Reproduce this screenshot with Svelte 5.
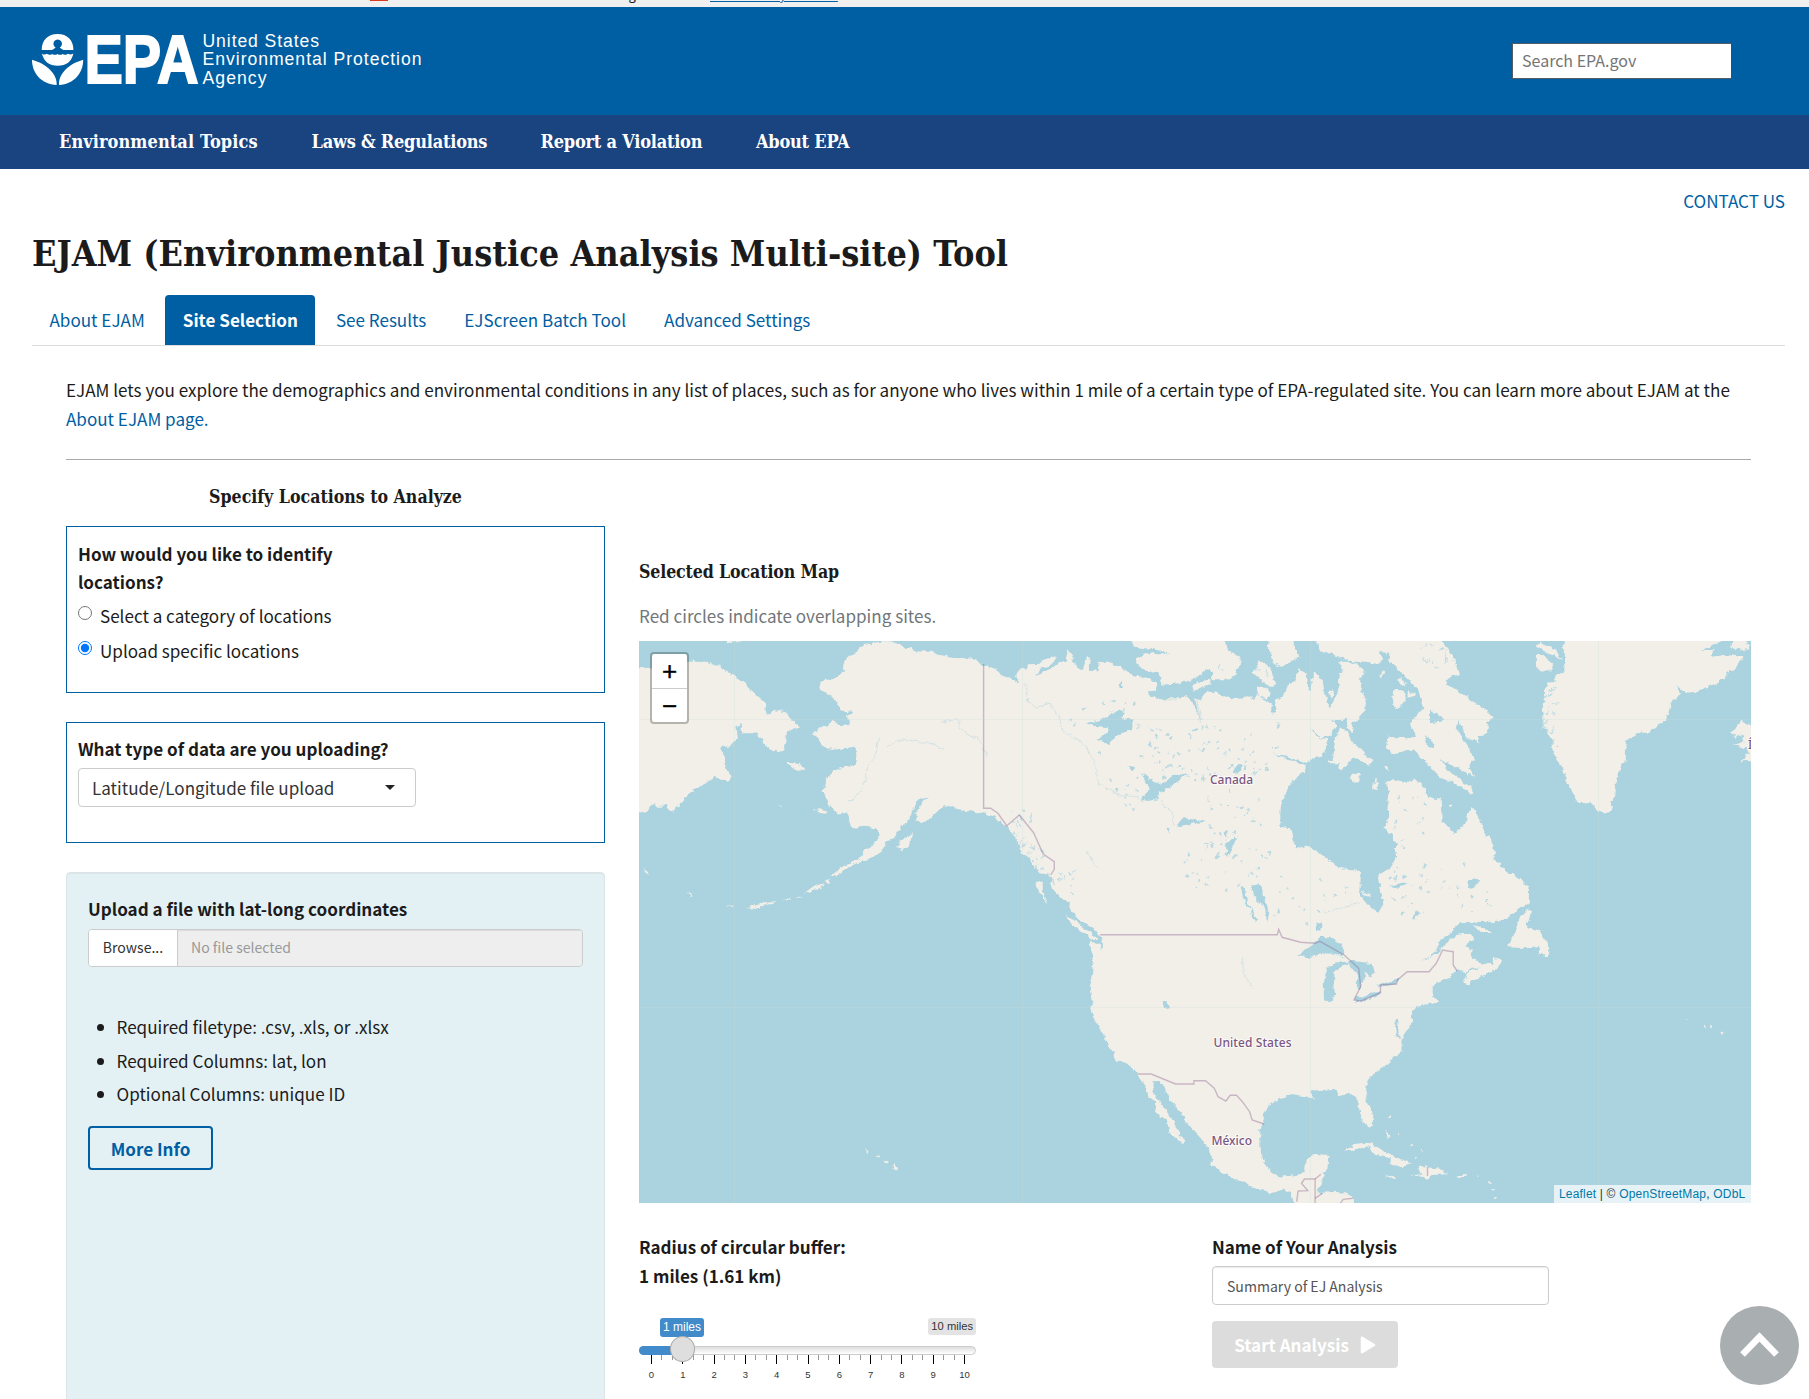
<script>
  const nav = ['Environmental Topics', 'Laws & Regulations', 'Report a Violation', 'About EPA'];
  const tabs = ['About EJAM', 'Site Selection', 'See Results', 'EJScreen Batch Tool', 'Advanced Settings'];
  const requirements = [
    'Required filetype: .csv, .xls, or .xlsx',
    'Required Columns: lat, lon',
    'Optional Columns: unique ID'
  ];

  let active = $state('Site Selection');
  let mode = $state('upload');

  // Slider scale: one major tick per mile, two minor ticks between
  const ticks = Array.from({ length: 31 }, (_, i) => ({ major: i % 3 === 0, label: i / 3, left: (i / 30) * 100 }));

  // Map sheets: every sheet has its own origin and scale
  const sheets = {
    A: [630, 540, 2.8, 3],
    B: [1180, 540, 2.613, 3],
    C: [1000, 840, 2.063, 3],
    D: [1000, 640, 3, 3]
  };
  function project(src) {
    let s = sheets.D;
    const out = [];
    for (const token of src.trim().split(/\s+/)) {
      if (sheets[token]) s = sheets[token];
      else {
        const [x, y] = token.split(',').map(Number);
        out.push(`${(s[0] + x / s[2]).toFixed(1)},${(s[1] + y / s[3]).toFixed(1)}`);
      }
    }
    return out.join(' ');
  }

  const land = [
    // North American mainland
    `A 537,420 575,417 595,400 598,375 612,348 640,330 652,312 685,308 720,303 750,310 770,328 785,322 800,335 840,333 865,345 900,350 925,358 955,352 975,365 990,378 1015,382 1040,402 1065,415 1090,428
     D 45,105 60,88 80,85 85,73 110,72 140,58 172,48 165,60 145,78 120,85 105,110 125,95 150,88 175,70 200,60 197,22 215,45 225,75 245,90 262,48 272,60 268,90 292,92 297,66 325,68 355,78 385,98 415,110 450,116 472,135 468,150 445,155 447,170 480,178 530,178 560,165 570,180 585,200 600,250 592,200 582,175 600,180 622,150 650,160 690,175 740,172 765,178 768,160 790,180 815,190 818,220 830,215 825,180 850,170 862,140 885,120 895,85 920,100 925,150 932,150 935,120 945,95 965,120 970,150 985,205 1000,190 1015,150 1018,110 1030,100 1015,65 1040,65 1070,75 1095,90 1080,120 1085,155 1098,185 1095,215 1065,245 1055,250 1060,280 1040,262 1035,235 1020,245 995,240 1010,255 1000,275 985,292 960,290 932,265 950,290 985,298 985,310 965,350 932,355 918,370 915,395 895,405 870,435 855,460 842,500 840,560 870,565 885,625 910,618 950,632 985,660 1025,685 1080,690 1082,740 1080,765 1115,805 1135,815 1150,790 1140,740 1132,705 1165,690 1188,655 1188,610 1172,580 1150,565 1170,525 1162,480 1168,465 1160,425 1180,418 1225,428 1245,418 1275,445 1285,470 1322,480 1325,545 1362,580 1390,560 1405,520 1417,498 1440,540 1455,580 1480,615 1482,660 1500,672
     B 836,980 885,1012 912,1045
     C 1091,190 1065,215 1035,245 950,246 935,272 915,295 900,330 885,350 865,362 890,350 910,330 925,300 950,282 975,282 978,295 960,315 975,330 972,350 985,368 1010,372 1015,378 985,382 960,395 942,393 925,415 905,425 892,440 893,465 905,488 890,490 860,500 850,510 850,545 838,575 828,600 828,635 810,655 800,672 785,685 770,705 758,720 753,745 757,780 768,820 770,855 760,865 745,835 738,800 738,775 722,760 705,768 690,750 665,752 640,755 648,775 625,770 600,765 575,775 550,800 542,850 537,870 537,930 545,970 560,998 580,1010 610,1005 625,1000 635,950 655,943 680,945 675,985 665,1015 658,1040 655,1060 690,1055 715,1060 730,1075 730,1100 610,1100 600,1065 585,1045 555,1060 520,1040 490,1020 460,1000 438,975 435,950 425,915 400,870 385,850 375,820 350,780 335,730 315,722 314,750 325,780 345,815 358,845 370,885 382,905 378,912 350,880 345,845 320,815 322,790 305,765 300,740 285,702 275,685 258,668 238,660 235,640 218,605 215,580 197,545 188,515 190,490 185,450 190,400 192,350 183,303 205,310 212,335 212,305 205,283 190,260 165,240 150,215 140,190 120,165 105,140 105,110
     A 1180,1005 1150,1000 1130,980 1115,950 1095,940 1085,905 1072,885 1060,865 1040,850 1020,830 1000,822 965,815 935,812 900,800 880,795 860,815 830,845 800,845 800,815 820,790 835,770 810,775 790,810 785,840 760,860 745,890 720,905 700,935 670,960 640,965 610,985 570,1012 565,1005 600,975 640,960 660,930 690,905 700,880 690,865 655,860 620,865 612,830 608,820 580,820 555,790 542,755 550,720 570,690 605,680 635,670 632,620 600,625 565,630 540,620 530,600 508,580 540,560 570,540 585,555 615,555 610,530 620,515 588,510 580,485 560,465 533,445`,
    // Chukotka
    `A 10,380 60,385 160,365 215,365 250,380 285,405 320,430 350,465 380,490 385,525 400,510 440,518 450,540 475,558 440,575 430,630 415,640 385,620 365,590 345,580 315,580 310,550 298,560 302,595 280,620 250,620 265,650 270,690 285,710 275,722 240,712 180,750 145,785 120,818 100,797 60,797 45,820 10,812`,
    // Arctic archipelago
    `D 388,-9 400,20 460,28 500,35 510,40 440,40 405,55 415,80 450,97 475,100 485,135 540,130 590,115 620,88 640,100 635,118 690,118 705,105 720,70 718,50 690,35 665,-9`,
    `D 575,140 600,125 632,118 630,132 580,152`,
    `D 760,100 780,62 810,85 825,130 815,140 790,125`,
    `D 805,-9 808,40 820,70 850,80 870,70 898,50 875,-9`,
    `D 770,140 800,140 812,160 795,178 775,165`,
    `D 945,-9 960,30 1000,45 1060,65 1100,65 1130,75 1150,60 1140,35 1165,45 1165,65 1190,85 1215,110 1235,130 1255,150 1270,205 1230,250 1245,290 1220,295 1165,290 1158,320 1175,340 1240,330 1280,370 1320,410 1385,440 1415,460 1410,440 1350,395 1320,360 1350,370 1410,405 1425,410 1405,385 1425,360 1410,330 1390,300 1370,270 1375,240 1400,290 1440,310 1440,285 1465,280 1460,245 1482,232 1450,205 1420,185 1390,165 1345,135 1340,120 1380,100 1365,60 1345,30 1320,-9`,
    `D 1020,262 1040,275 1060,310 1090,330 1092,345 1118,360 1105,375 1060,350 1040,375 1020,390 1015,370 985,370 1000,350 1005,300`,
    `D 1050,410 1065,398 1085,400 1070,428 1055,425`,
    `D 1127,420 1135,432 1130,450 1120,448 1119,430`,
    `D 1178,160 1190,149 1212,152 1217,175 1210,195 1190,204 1176,192`,
    `D 1225,150 1235,160 1250,162 1248,174 1226,172`,
    `D 1138,110 1152,88 1158,95 1146,118`,
    `D 1190,118 1205,115 1220,135 1200,132`,
    `D 1150,378 1165,378 1168,390 1155,388`,
    `D 1405,445 1417,458 1412,466`,
    `D 1345,495 1355,493 1352,508`,
    `D 1085,755 1108,762 1108,770 1090,766`,
    `D 990,155 998,150 998,175 988,175`,
    // Greenland and Iceland
    `B 1003,290 1003,340 1005,400 985,400 980,430 960,430 948,490 950,560 972,600 980,650 1000,680 1010,720 1040,790 1070,785 1105,822 1125,815 1135,760 1140,710 1165,660 1165,605 1200,575 1230,575 1270,540 1285,485 1310,460 1298,432 1320,458 1350,455 1410,425 1478,352 1430,345 1385,350 1400,330 1360,330 1400,315 1425,290`,
    `B 930,345 950,345 975,375 970,390 945,398 930,380`,
    `B 930,320 940,308 985,330 1000,360 965,340`,
    `B 1445,290 1440,325 1485,332 1482,290`,
    `B 1500,560 1465,542 1440,580 1450,590 1470,585 1475,605 1445,615 1480,625 1490,640 1465,660 1500,662`,
    // Atlantic coast and Caribbean
    `C 1090,205 1098,212 1085,262 1110,270 1120,295 1133,320 1130,350 1110,340 1118,320 1090,325 1045,322 1055,295 1065,265 1072,235`,
    `C 975,255 1000,262 1015,280 990,275`,
    `C 955,430 965,400 990,380 1015,375 1020,350 1038,365 1025,388 985,410 968,433`,
    `C 712,932 730,912 760,908 790,930 815,950 848,970 830,978 808,975 805,955 775,945 760,922`,
    `C 845,1005 870,1003 862,980 905,985 925,1003 890,1005 885,1018 870,1010`,
    `C 943,1005 962,1006 958,1014 943,1013`,
    `C 795,1005 820,1012 812,1018`,
    `C 795,868 804,890 799,895`,
    // Pacific islands
    `C 135,228 160,245 195,290 205,300 190,300 150,258`,
    `C 70,125 88,125 88,150 98,190 78,150`,
    `A 745,925 760,900 792,880 788,905 765,930`,
    `A 440,668 475,672 492,688 475,692 445,680`,
    `A 518,812 535,803 550,812 545,822`,
    `A 490,1058 510,1042 540,1030 535,1042 500,1060`,
    `A 545,1022 556,1018 556,1028 548,1030`,
    `A 320,1102 345,1097 400,1085 410,1088 350,1103`,
    `A 420,1084 450,1073 452,1078`,
    `A 462,1072 482,1064 480,1070`,
    `A 158,1060 178,1066 172,1071`,
    `A 270,1098 284,1096 286,1102`,
    `A 38,984 48,990 52,1004 44,1000`,
    `A 412,793 428,800 424,804`,
    `A 690,1848 700,1848 700,1856`,
    `A 655,1830 668,1832 664,1838`,
    `A 710,1860 722,1864 724,1870 712,1868`,
    `A 735,1872 750,1880 748,1896 738,1890`,
    `A 270,296 320,296 300,306 275,310`
  ].map(project);

  const lakes = [
    `D 258,250 300,240 355,212 372,220 360,232 382,240 400,235 395,270 370,278 350,285 325,312 292,300 320,280 325,265 295,262`,
    `D 425,480 430,468 450,450 425,400 460,425 485,435 520,405 565,402 535,420 505,445 480,460 475,478 440,483`,
    `D 525,565 535,545 555,535 620,545 580,550 545,558`,
    `D 500,563 512,565 508,578`,
    `D 677,645 680,608 700,590 708,592 700,622 688,645`,
    `D 670,575 682,570 682,590`,
    `D 755,740 772,730 782,740 790,765 808,820 803,842 796,835 797,805 770,780`,
    `D 722,745 732,742 742,790 776,845 765,848 750,810 735,790`,
    `D 700,390 712,375 725,376 720,400 702,402`,
    `D 385,378 405,382 400,394 388,388`,
    `D 815,340 860,348 920,372 915,378 860,355`,
    `D 1238,835 1250,815 1260,815 1245,842`,
    `D 1405,720 1420,712 1440,722 1425,740 1405,745`,
    `D 1170,740 1220,728 1222,734 1190,745`,
    `D 1290,210 1330,230 1325,245 1290,250`,
    `D 1278,285 1300,305 1305,325 1280,318`,
    `C 653,250 660,245 665,258 661,272 654,270`,
    `C 613,350 635,320 655,305 660,290 690,295 695,308 708,312 710,340 705,352 690,342 670,340 640,350`,
    `C 668,480 668,430 672,400 680,375 700,365 720,366 718,374 700,382 690,402 688,440 692,460 685,485 675,486`,
    `C 718,360 740,365 765,368 772,400 762,408 752,396 750,420 742,450 736,440 738,400 722,378`,
    `C 732,475 750,468 785,450 785,460 750,484 733,487`,
    `C 778,437 795,428 822,418 818,432 785,440`,
    `C 336,488 348,490 350,505 341,507`,
    `C 815,540 822,540 822,575 828,600 820,590`,
    `D 365,125 368,150 358,150 360,125`
  ].map(project);

  const borders = [
    `A 990,372 990,805 1010,805 1030,820 1055,857 1090,825 1130,878 1157,942 1188,965 1188,988 1178,1005`,
    `C 207,284 572,284 575,268 582,292 620,307 650,310 660,304 710,345 740,385 744,440 730,480 745,483 785,458 785,435 818,432 820,420 840,395 885,395 900,370 913,330 925,333 935,335 935,375 943,393`,
    `C 285,702 312,702 362,732 400,732 400,722 424,722 442,745 450,770 466,783 475,766 488,766 500,785 515,815 520,840 545,852`,
    `C 612,1085 615,1053 635,1052 622,1030 628,1017 650,1017 650,1095`,
    `C 650,1017 662,1003`,
    `C 650,1075 665,1060`,
    `C 702,1090 708,1078 728,1075`,
    `C 882,980 882,1008`
  ].map(project);

  const rivers = [
    `D 75,130 80,180 108,203 150,192 182,240 180,265 255,315 290,380 292,428 345,460 420,475`,
    `D 480,480 515,520 522,560`,
    `D 260,632 275,660 296,690`,
    `D 1080,790 1000,810 960,820`,
    `A 695,590 690,640 665,680 655,740 610,790`,
    `A 720,620 760,600 810,605 850,612 880,628`,
    `A 870,550 910,535 940,580 980,600 1000,650`,
    `C 500,350 502,400 520,445`,
    `D 590,180 605,250`
  ].map(project);

  // Scattered shield lakes, placed from a fixed seed
  let seed = 41;
  const random = () => (seed = (seed * 16807) % 2147483647) / 2147483647;
  const scatter = (x, y, w, h, n) =>
    Array.from({ length: n }, () => ({
      x: x + random() * w,
      y: y + random() * h,
      rx: 0.5 + random() * 1.9,
      ry: 0.4 + random() * 1.3,
      a: random() * 180
    }));
  const ponds = [
    ...scatter(1150, 718, 55, 65, 42),
    ...scatter(1205, 725, 75, 50, 36),
    ...scatter(1205, 790, 60, 60, 30),
    ...scatter(1180, 845, 90, 45, 34),
    ...scatter(1270, 865, 85, 65, 18),
    ...scatter(1395, 795, 30, 60, 16),
    ...scatter(1390, 865, 100, 50, 36),
    ...scatter(1070, 690, 70, 40, 14),
    ...scatter(1095, 750, 50, 65, 12)
  ];
  // Fjord-cut shorelines
  const inlets = [
    ...scatter(1010, 810, 22, 36, 26),
    ...scatter(1022, 845, 22, 26, 20),
    ...scatter(1205, 665, 80, 20, 16),
    ...scatter(1420, 645, 34, 26, 18),
    ...scatter(1545, 680, 14, 70, 20),
    ...scatter(1050, 870, 26, 30, 12)
  ];
</script>

<div class="banner">
  <span class="flag"></span>
  <span class="official">An official website of the United States government</span>
  <a class="know" href="#know">Here's how you know</a>
</div>

<header>
  <svg class="logo" width="400" height="60" viewBox="0 0 400 60" role="img" aria-label="EPA">
    <g fill="#fff">
      <path d="M9.700 17 C9.700 7 16 1 25.600 1 C35.200 1 41.400 7 41.400 17 Z" />
      <path d="M23.600 14.500 A4.300 4.300 0 1 1 27.800 14.500 Q29 15.800 31.500 17.100 L20 17.100 Q22.400 15.800 23.600 14.500 Z" fill="#005ea2" />
      <path d="M9.900 20.400 q2.500 2.200 5 .4 q2.600 2 5.300 .1 q2.600 1.800 5.300 0 q2.600 1.900 5.300 0 q2.600 1.800 5.300 -.1 q2.600 1.600 5.300 -.4 Q38.600 32.700 25.700 32.700 Q12.900 32.700 9.900 20.400 Z" />
      <path d="M0 26.700 C0 40 9 51 24.600 52 C25.500 42 15.500 31 0 26.700 Z" />
      <path d="M51.200 26.700 C51.200 40 42 51 27 52 C26 42 35.700 31 51.200 26.700 Z" />
      <text class="mark" x="52.500" y="50.300" textLength="114" lengthAdjust="spacingAndGlyphs">EPA</text>
      <text class="agency" x="170.500" y="14.300" textLength="116.500" lengthAdjust="spacing">United States</text>
      <text class="agency" x="170.500" y="32.400" textLength="219" lengthAdjust="spacing">Environmental Protection</text>
      <text class="agency" x="170.500" y="51" textLength="64" lengthAdjust="spacing">Agency</text>
    </g>
  </svg>
  <input class="search" type="text" placeholder="Search EPA.gov" />
</header>

<nav>
  {#each nav as item}<a href="#nav">{item}</a>{/each}
</nav>

<main>
  <a class="contact" href="#contact">CONTACT US</a>
  <h1>EJAM (Environmental Justice Analysis Multi-site) Tool</h1>
  <div class="tabs">
    {#each tabs as tab}
      <button class:active={active === tab} onclick={() => (active = tab)}>{tab}</button>
    {/each}
  </div>

  <div class="content">
    <p class="intro">
      EJAM lets you explore the demographics and environmental conditions in any list of places, such as for anyone who lives within 1 mile of a certain type of EPA-regulated site. You can learn more about EJAM at the <a href="#about">About EJAM page.</a>
    </p>
    <hr />

    <div class="columns">
      <section class="left">
        <h2 class="centered">Specify Locations to Analyze</h2>
        <div class="box identify">
          <strong>How would you like to identify locations?</strong>
          <label><input type="radio" bind:group={mode} value="category" />Select a category of locations</label>
          <label><input type="radio" bind:group={mode} value="upload" />Upload specific locations</label>
        </div>
        <div class="box kind">
          <strong>What type of data are you uploading?</strong>
          <div class="select"><span>Latitude/Longitude file upload</span><i></i></div>
        </div>
        <div class="well">
          <strong>Upload a file with lat-long coordinates</strong>
          <div class="file"><span class="browse">Browse...</span><span class="none">No file selected</span></div>
          <ul>
            {#each requirements as line}<li>{line}</li>{/each}
          </ul>
          <button class="more">More Info</button>
        </div>
      </section>

      <section class="right">
        <h2>Selected Location Map</h2>
        <p class="hint">Red circles indicate overlapping sites.</p>
        <div class="map">
          <svg width="1112" height="562" viewBox="639 641 1112 562">
            <defs>
              <filter id="coast" x="0" y="0" width="1" height="1">
                <feTurbulence type="fractalNoise" baseFrequency="0.16" numOctaves="3" seed="4" />
                <feDisplacementMap in="SourceGraphic" scale="6" xChannelSelector="R" yChannelSelector="G" />
              </filter>
            </defs>
            <g filter="url(#coast)">
              <rect x="620" y="620" width="1150" height="600" fill="#aad3df" />
              {#each land as points}<polygon class="land" {points} />{/each}
              {#each lakes as points}<polygon class="water" {points} />{/each}
              {#each ponds as p}<ellipse class="water pond" cx={p.x} cy={p.y} rx={p.rx} ry={p.ry} transform="rotate({p.a} {p.x} {p.y})" />{/each}
              {#each inlets as p}<ellipse class="water inlet" cx={p.x} cy={p.y} rx={p.rx * 1.6} ry={p.ry * 0.5} transform="rotate({p.a} {p.x} {p.y})" />{/each}
              {#each rivers as points}<polyline class="river" {points} />{/each}
              <g class="land">
                <circle cx="1687" cy="1020" r=".7" /><circle cx="1705" cy="1027" r="1.200" /><circle cx="1711" cy="1026" r="1" /><circle cx="1723" cy="1033" r="1.300" />
                <circle cx="1390" cy="1117" r="1.100" /><circle cx="1398" cy="1134" r="1" /><circle cx="1412" cy="1145" r="1" /><circle cx="1422" cy="1150" r="1" /><circle cx="1416" cy="1157" r="1" />
                <circle cx="1477" cy="1176" r=".8" /><circle cx="1490" cy="1182" r="1" /><circle cx="1493" cy="1190" r="1" /><circle cx="1495" cy="1198" r="1" />
              </g>
            </g>
            {#each borders as points}<polyline class="border" {points} />{/each}
            <path class="grid" d="M734.500 641V1203M1022.500 641V1203M1310.500 641V1203M1598.500 641V1203M639 719.500H1751M639 1007.500H1751" />
            <g class="place">
              <text x="1210" y="783.500" textLength="43">Canada</text>
              <text x="1213.500" y="1046.500" textLength="78">United States</text>
              <text x="1211.500" y="1145" textLength="40.500">México</text>
              <text x="1748" y="748.500">Í</text>
            </g>
          </svg>
          <div class="zoom"><button>+</button><button>−</button></div>
          <div class="credit"><a href="#leaflet">Leaflet</a> | © <a href="#osm">OpenStreetMap</a>, <a href="#odbl">ODbL</a></div>
        </div>

        <div class="controls">
          <div class="radius">
            <strong>Radius of circular buffer:</strong>
            <strong>1 miles (1.61 km)</strong>
            <div class="slider">
              <div class="marks"><span class="value">1 miles</span><span class="max">10 miles</span></div>
              <div class="track"><div class="fill"></div><div class="handle"></div></div>
              <div class="ticks">
                {#each ticks as t}
                  <i class:major={t.major} style="left: {t.left}%">{#if t.major}<b>{t.label}</b>{/if}</i>
                {/each}
              </div>
            </div>
          </div>
          <div class="name">
            <strong>Name of Your Analysis</strong>
            <input type="text" value="Summary of EJ Analysis" />
            <button class="start" disabled>
              <span>Start Analysis</span>
              <svg width="16" height="18" viewBox="0 0 16 18"><path d="M2 1.800 L14 9 L2 16.200 Z" fill="#fff" stroke="#fff" stroke-width="2.500" stroke-linejoin="round" /></svg>
            </button>
          </div>
        </div>
      </section>
    </div>
  </div>
</main>

<button class="top" aria-label="Back to top">
  <svg width="79" height="79" viewBox="0 0 79 79"><path d="M22.500 48.500 L39.500 31 L56.500 48.500" fill="none" stroke="#fff" stroke-width="6.500" /></svg>
</button>

<style>
  :global(body) {
    margin: 0;
    background: #fff;
    overflow: hidden;
  }
  :global(#app) {
    position: relative;
    height: 1399px;
    overflow: hidden;
    font-family: 'Noto Sans CJK SC', 'Open Sans', sans-serif;
    font-size: 17.070px;
    line-height: 29px;
    color: #1b1b1b;
  }
  * {
    box-sizing: border-box;
  }
  button,
  input {
    font: inherit;
    margin: 0;
  }
  a {
    color: #005ea2;
    text-decoration: none;
  }
  strong {
    display: block;
    font-weight: 700;
  }
  .banner {
    display: flex;
    align-items: flex-end;
    height: 7px;
    padding: 0 0 4px 370px;
    overflow: hidden;
    background: #f0f0f0;
    font-size: 12.900px;
    line-height: 16px;
    white-space: nowrap;
  }
  .flag {
    width: 18px;
    height: 12px;
    margin-bottom: 2px;
    background: #d83b20;
  }
  .official {
    width: 314px;
    margin-left: 8px;
  }
  .know {
    width: 128px;
    text-decoration: underline;
  }
  header {
    display: flex;
    justify-content: space-between;
    height: 108px;
    padding: 26px 78px 0 32px;
    background: #005ea2;
  }
  .mark {
    font: bold 69px 'Liberation Sans', sans-serif;
    stroke: #fff;
    stroke-width: 2px;
  }
  .agency {
    font: 17.600px 'Liberation Sans', sans-serif;
  }
  .search {
    width: 219px;
    height: 36px;
    margin-top: 10px;
    padding: 0 9px 2px;
    border: 1px solid #565c65;
    border-right: 0;
    border-radius: 0;
    background: #fff;
    font-size: 16px;
  }
  .search::placeholder {
    color: #757575;
    opacity: 1;
  }
  nav {
    display: grid;
    grid-template-columns: 252.500px 229px 215.500px auto;
    height: 54px;
    padding-left: 59px;
    background: #1a4480;
  }
  nav a {
    color: #fff;
    font: bold 18px/53px 'DejaVu Serif Condensed', 'DejaVu Serif', serif;
    letter-spacing: -0.220px;
    white-space: nowrap;
  }
  nav a:first-child {
    letter-spacing: 0.080px;
  }
  main {
    padding: 17px 24px 0 32px;
  }
  .contact {
    display: block;
    text-align: right;
  }
  h1 {
    margin: 17px 0 0;
    font: bold 35.700px/42px 'DejaVu Serif Condensed', 'DejaVu Serif', serif;
    white-space: nowrap;
  }
  .tabs {
    display: flex;
    gap: 3px;
    margin-top: 21px;
    border-bottom: 1px solid #ddd;
  }
  .tabs button {
    height: 50px;
    padding: 0 17.500px 2px;
    border: 0;
    border-radius: 4px 4px 0 0;
    background: none;
    color: #005ea2;
  }
  .tabs .active {
    background: #005ea2;
    color: #fff;
    font-weight: 700;
  }
  .content {
    padding: 29px 34px 0;
  }
  .intro {
    width: 1685px;
    margin: 0;
  }
  hr {
    height: 1px;
    margin: 26px 0 0;
    border: 0;
    background: #a9a9a9;
  }
  .columns {
    display: grid;
    grid-template-columns: 539px 1112px;
    gap: 34px;
  }
  h2 {
    margin: 0;
    font: bold 17.600px/28px 'DejaVu Serif Condensed', 'DejaVu Serif', serif;
  }
  .right h2 {
    letter-spacing: -0.120px;
  }
  .centered {
    margin: 23px 0 15px;
    text-align: center;
  }
  .box {
    padding: 13px 11px 0;
    border: 1px solid #005ea2;
    line-height: 28px;
  }
  .identify {
    height: 167px;
  }
  .identify strong {
    width: 300px;
  }
  .identify label {
    display: flex;
    gap: 8px;
    height: 35px;
    padding-top: 6px;
    line-height: 28px;
  }
  .identify input {
    width: 14px;
    height: 14px;
    margin-top: 4px;
  }
  .kind {
    height: 121px;
    margin-top: 29px;
    padding-top: 12px;
  }
  .select {
    display: flex;
    align-items: center;
    justify-content: space-between;
    width: 338px;
    height: 39px;
    margin-top: 5px;
    padding: 0 20px 0 13px;
    border: 1px solid #ccc;
    border-radius: 4px;
    color: #333;
  }
  .select i {
    border: 5px solid transparent;
    border-top-color: #222;
    border-bottom: 0;
  }
  .well {
    height: 560px;
    margin-top: 29px;
    padding: 21px 21px 22px;
    border: 1px solid #dfe5e6;
    border-radius: 4px;
    background: #e3f1f5;
    box-shadow: inset 0 1px 1px rgba(0, 0, 0, 0.05);
  }
  .file {
    display: flex;
    height: 38px;
    margin-top: 6px;
    border: 1px solid #ccc;
    border-radius: 4px;
    overflow: hidden;
    font-size: 14.050px;
    line-height: 35px;
  }
  .browse {
    width: 89px;
    border-right: 1px solid #ccc;
    background: #fff;
    color: #333;
    text-align: center;
  }
  .none {
    flex: 1;
    padding-left: 13px;
    background: #eee;
    color: #999;
    box-shadow: inset 0 1px 1px rgba(0, 0, 0, 0.08);
  }
  ul {
    margin: 45px 0 0;
    padding-left: 28.500px;
  }
  li {
    margin-bottom: 4.600px;
  }
  .more {
    display: block;
    width: 125px;
    height: 44px;
    margin-top: 18px;
    border: 2px solid #005ea2;
    border-radius: 4px;
    background: none;
    color: #005ea2;
    font-weight: 700;
    line-height: 37px;
  }
  .right {
    padding-top: 98px;
  }
  .hint {
    margin: 15px 0 11px;
    color: #71767a;
  }
  .map {
    position: relative;
    height: 562px;
    overflow: hidden;
    background: #aad3df;
  }
  .map > svg {
    display: block;
  }
  .land {
    fill: #f2efe9;
  }
  .water {
    fill: #aad3df;
  }
  .pond {
    opacity: 0.8;
  }
  .inlet {
    opacity: 0.75;
  }
  .river {
    fill: none;
    stroke: #cfe0e2;
    stroke-width: 0.900;
  }
  .border {
    fill: none;
    stroke: #8d618b;
    stroke-opacity: 0.400;
    stroke-width: 1.400;
  }
  .grid {
    fill: none;
    stroke: #cdd;
    stroke-opacity: 0.250;
  }
  .place text {
    fill: #7b5580;
    stroke: rgba(255, 255, 255, 0.7);
    stroke-width: 2px;
    paint-order: stroke;
    font: 500 12px 'Noto Sans', sans-serif;
  }
  .zoom {
    position: absolute;
    top: 11px;
    left: 11px;
    display: flex;
    flex-direction: column;
    border: 2px solid rgba(0, 0, 0, 0.25);
    border-radius: 4px;
    background: #fff;
    background-clip: padding-box;
  }
  .zoom button {
    width: 35px;
    height: 34px;
    padding: 0;
    border: 0;
    background: none;
    color: #000;
    font: 26px/34px 'Liberation Sans', sans-serif;
    -webkit-text-stroke: 0.4px #000;
  }
  .zoom button + button {
    border-top: 1px solid #ccc;
  }
  .credit {
    position: absolute;
    right: 0;
    bottom: 0;
    width: 197px;
    height: 18px;
    padding-left: 5px;
    background: rgba(255, 255, 255, 0.7);
    color: #333;
    font: 12px/18px 'Liberation Sans', sans-serif;
    letter-spacing: 0.180px;
    white-space: nowrap;
  }
  .credit a {
    color: #0078a8;
  }
  .controls {
    display: grid;
    grid-template-columns: 573px 337px;
    padding-top: 29px;
  }
  .slider {
    width: 337px;
    margin-top: 28px;
    font-family: 'Liberation Sans', sans-serif;
  }
  .marks {
    display: flex;
    align-items: flex-start;
    justify-content: space-between;
    height: 28px;
    padding-left: 21px;
    font-size: 12px;
  }
  .marks span {
    padding: 0 3px;
    border-radius: 3px;
  }
  .value {
    background: #428bca;
    color: #fff;
    line-height: 19px;
  }
  .marks .max {
    background: #e3e3e3;
    color: #333;
    font-size: 11.200px;
    line-height: 17px;
  }
  .track {
    position: relative;
    height: 9px;
    border: 1px solid #ccc;
    border-radius: 8px;
    background: linear-gradient(#dedede, #fff);
  }
  .fill {
    width: 38px;
    height: 9px;
    margin: -1px;
    border-radius: 8px 0 0 8px;
    background: #428bca;
  }
  .handle {
    position: absolute;
    z-index: 1;
    top: -11px;
    left: 30px;
    width: 25px;
    height: 28px;
    height: 26px;
    border: 1px solid #ababab;
    border-radius: 50%;
    background: #dedede;
  }
  .ticks {
    position: relative;
    width: 313px;
    margin-left: 12px;
  }
  .ticks i {
    position: absolute;
    width: 1px;
    height: 5px;
    background: #999;
    font-style: normal;
  }
  .ticks .major {
    height: 9px;
    background: #000;
  }
  .ticks b {
    position: absolute;
    top: 14px;
    left: -10px;
    width: 21px;
    color: #333;
    font-size: 9.500px;
    font-weight: 400;
    line-height: 12px;
    text-align: center;
  }
  .name input {
    display: block;
    width: 337px;
    height: 39px;
    margin-top: 5px;
    padding: 0 14px;
    border: 1px solid #ccc;
    border-radius: 4px;
    color: #555;
    font-size: 14.050px;
    box-shadow: inset 0 1px 1px rgba(0, 0, 0, 0.08);
  }
  .start {
    display: flex;
    align-items: center;
    justify-content: center;
    gap: 11px;
    width: 186px;
    height: 47px;
    margin-top: 16px;
    border: 0;
    border-radius: 4px;
    background: #dcdcdc;
    color: #fff;
    font-weight: 700;
  }
  .top {
    position: absolute;
    top: 1306px;
    left: 1720px;
    width: 79px;
    height: 79px;
    padding: 0;
    border: 0;
    border-radius: 50%;
    background: #a9aeb1;
  }
  .top svg {
    display: block;
  }
</style>
